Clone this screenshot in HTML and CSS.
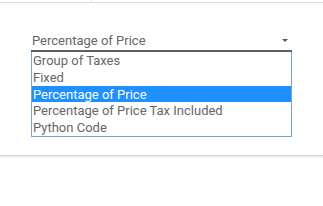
FILE: index.html
```html
<!DOCTYPE html>
<html lang="en">
<head>
    <meta charset="UTF-8">
    <title>Tax computation</title>
    <link rel="stylesheet" href="styles.css">
</head>
<body>
    <div class="topbar"><div class="tab"></div></div>

    <div class="sheet">
        <div class="field">
            <div class="select">
                <span>Percentage of Price</span>
                <span class="caret"></span>
            </div>
            <ul class="options">
                <li>Group of Taxes</li>
                <li>Fixed</li>
                <li class="selected">Percentage of Price</li>
                <li>Percentage of Price Tax Included</li>
                <li>Python Code</li>
            </ul>
        </div>
    </div>

    <div class="footer"></div>
</body>
</html>
```

FILE: styles.css
```css
body { margin: 0; background: #fff; font-family: Roboto, "Noto Sans", sans-serif; font-size: 13px; color: #666; }
.topbar { height: 2px; border-bottom: 1px solid #d9dee6; }
.tab { width: 91px; height: 2px; border-right: 1px solid #d9dee6; }
.sheet { padding: 28px 0 18px 31px; }
.field { width: 261px; }
.select { display: flex; justify-content: space-between; align-items: center; height: 18px; padding: 0 4px 1px 1px; border-bottom: 2px solid #5e5e5e; }
.caret { width: 0; height: 0; border-left: 3px solid transparent; border-right: 3px solid transparent; border-top: 3px solid #555; }
.options { list-style: none; margin: 0; padding: 0; border: 1px solid #7f9ed8; border-top: none; }
.options li { height: 16.8px; line-height: 17px; padding-left: 1px; }
.options .selected { background: #1e90ff; color: #fff; }
.footer { height: 3px; border-top: 1px solid #d4d9df; background: linear-gradient(#e6e9ec, #fff); }
```
